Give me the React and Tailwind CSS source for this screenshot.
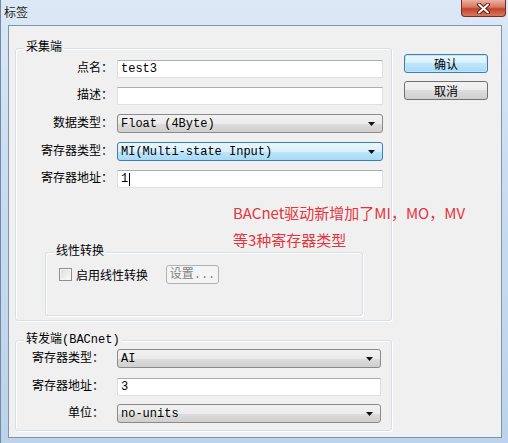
import React from "react";

const selectBg =
  "bg-[linear-gradient(to_bottom,#f2f2f2_0%,#ebebeb_50%,#dddddd_50%,#cfcfcf_100%)] border-[#8a8a8a]";
const selectHot =
  "bg-[linear-gradient(to_bottom,#eaf6fd_0%,#d9f0fc_50%,#bee6fd_50%,#a7d9f5_100%)] border-[#3c7fb1]";

function Arrow() {
  return (
    <svg width="7" height="4" viewBox="0 0 7 4" className="shrink-0">
      <path d="M0 0 H7 L3.5 4 Z" fill="#111" />
    </svg>
  );
}

function Select({ value, hot, width = "w-[266px]", height = "h-[19px]" }) {
  return (
    <div
      className={`${width} ${height} flex items-center justify-between border rounded-[3px] pl-[3px] pr-[7px] ${
        hot ? selectHot : selectBg
      }`}
    >
      <span className="leading-none">{value}</span>
      <Arrow />
    </div>
  );
}

function TextBox({ value, caret, width = "w-[266px]" }) {
  return (
    <div
      className={`${width} h-[18px] flex items-center bg-white border border-[#dbdfe6] border-t-[#abadb3] pl-[3px]`}
    >
      <span className="leading-none">{value}</span>
      {caret && <span className="w-px h-[13px] bg-black ml-[1px]" />}
    </div>
  );
}

function Row({ label, children, labelW = "w-[97px]", gap = "ml-[4px]", className = "" }) {
  return (
    <div className={`flex items-center ${className}`}>
      <div className={`${labelW} text-right leading-none`}>{label}</div>
      <div className={gap}>{children}</div>
    </div>
  );
}

function GroupBox({ title, className, children }) {
  return (
    <div
      className={`relative border border-[#d5dfe5] rounded-[3px] shadow-[inset_1px_1px_0_#ffffff,1px_1px_0_#ffffff] ${className}`}
    >
      <span className="absolute left-[8px] top-[-9px] px-[2px] bg-[#f0f0f0] leading-[16px]">
        {title}
      </span>
      {children}
    </div>
  );
}

function Button({ children, focused }) {
  return (
    <div
      className={`w-[84px] h-[19px] flex items-center justify-center rounded-[3px] border leading-none ${
        focused
          ? "border-[#3c7fb1] bg-[linear-gradient(to_bottom,#eaf6fd_0%,#d9f0fc_50%,#bee6fd_50%,#a7d9f5_100%)] shadow-[inset_0_0_0_1px_#c4e5f6]"
          : "border-[#707070] bg-[linear-gradient(to_bottom,#f2f2f2_0%,#ebebeb_50%,#dddddd_50%,#cfcfcf_100%)]"
      }`}
    >
      {children}
    </div>
  );
}

export default function App() {
  return (
    <div className="relative w-[508px] h-[443px] overflow-hidden flex flex-col bg-[linear-gradient(to_bottom,#dce8f5_0%,#c9dcf0_40%,#bdd3eb_100%)] border-l border-[#6f8aa6] text-[12px] text-black font-['Liberation_Mono','Noto_Sans_CJK_SC',monospace]">
      {/* title bar */}
      <div className="h-[25px] flex items-start justify-between shrink-0">
        <span className="pl-[3px] pt-[5px] leading-[14px] font-['Noto_Sans_CJK_SC',sans-serif] text-[12px] text-[#1e1e1e]">
          标签
        </span>
        <div className="mr-[2px] w-[45px] h-[17px] rounded-b-[4px] border border-t-0 border-[#7a2c1e] bg-[linear-gradient(to_bottom,#eab2a2_0%,#d7765d_45%,#c2432a_55%,#d9785c_100%)] flex items-center justify-center">
          <svg width="13" height="11" viewBox="0 0 13 11">
            <path
              d="M2 1.5 L11 9.5 M11 1.5 L2 9.5"
              stroke="#5a1b10"
              strokeWidth="4"
              strokeLinecap="round"
            />
            <path
              d="M2 1.5 L11 9.5 M11 1.5 L2 9.5"
              stroke="#ffffff"
              strokeWidth="2"
              strokeLinecap="round"
            />
          </svg>
        </div>
      </div>

      {/* client area */}
      <div className="ml-[7px] w-[494px] h-[413px] border border-[#7f93aa] bg-[#f0f0f0] flex pl-[6px] pt-[22px]">
        <div className="w-[377px] flex flex-col">
          <GroupBox title="采集端" className="h-[273px]">
            <div className="flex flex-col pt-[11px] gap-[9px]">
              <Row label="点名：">
                <TextBox value="test3" />
              </Row>
              <Row label="描述：">
                <TextBox value="" />
              </Row>
              <Row label="数据类型：">
                <Select value="Float (4Byte)" />
              </Row>
              <Row label="寄存器类型：">
                <Select value="MI(Multi-state Input)" hot />
              </Row>
              <Row label="寄存器地址：">
                <TextBox value="1" caret />
              </Row>
            </div>
            <GroupBox title="线性转换" className="ml-[29px] mt-[64px] w-[318px] h-[64px]">
              <div className="flex items-center pt-[12px] pl-[13px]">
                <div className="w-[13px] h-[13px] border border-[#8f8f8f] bg-[linear-gradient(135deg,#dcdcdc,#fbfbfb)] shadow-[inset_0_0_0_1px_#f4f4f4]" />
                <span className="ml-[4px] leading-none font-['Noto_Sans_CJK_SC',sans-serif]">启用线性转换</span>
                <div className="ml-[18px] w-[53px] h-[19px] flex items-center justify-center rounded-[3px] border border-[#adb2b5] bg-[#f4f4f4] text-[#838383] leading-none">
                  设置...
                </div>
              </div>
            </GroupBox>
          </GroupBox>

          <GroupBox title="转发端(BACnet)" className="mt-[19px] h-[91px]">
            <div className="flex flex-col pt-[8px]">
              <Row label="寄存器类型：" labelW="w-[88px]" gap="ml-[13px]">
                <Select value="AI" width="w-[264px]" />
              </Row>
              <Row label="寄存器地址：" labelW="w-[88px]" gap="ml-[13px]" className="mt-[10px]">
                <TextBox value="3" width="w-[264px]" />
              </Row>
              <Row label="单位：" labelW="w-[88px]" gap="ml-[13px]" className="mt-[8px]">
                <Select value="no-units" width="w-[264px]" />
              </Row>
            </div>
          </GroupBox>
        </div>

        <div className="ml-[12px] pt-[6px] flex flex-col gap-[8px] font-['Noto_Sans_CJK_SC',sans-serif]">
          <Button focused>确认</Button>
          <Button>取消</Button>
        </div>
      </div>

      {/* red annotation over the dialog */}
      <div className="absolute left-[232px] top-[199px] text-[15px] leading-[27px] text-[#e5343c] font-['Noto_Sans_CJK_SC','Liberation_Sans',sans-serif]">
        <div>BACnet驱动新增加了MI，MO，MV</div>
        <div>等3种寄存器类型</div>
      </div>
    </div>
  );
}
